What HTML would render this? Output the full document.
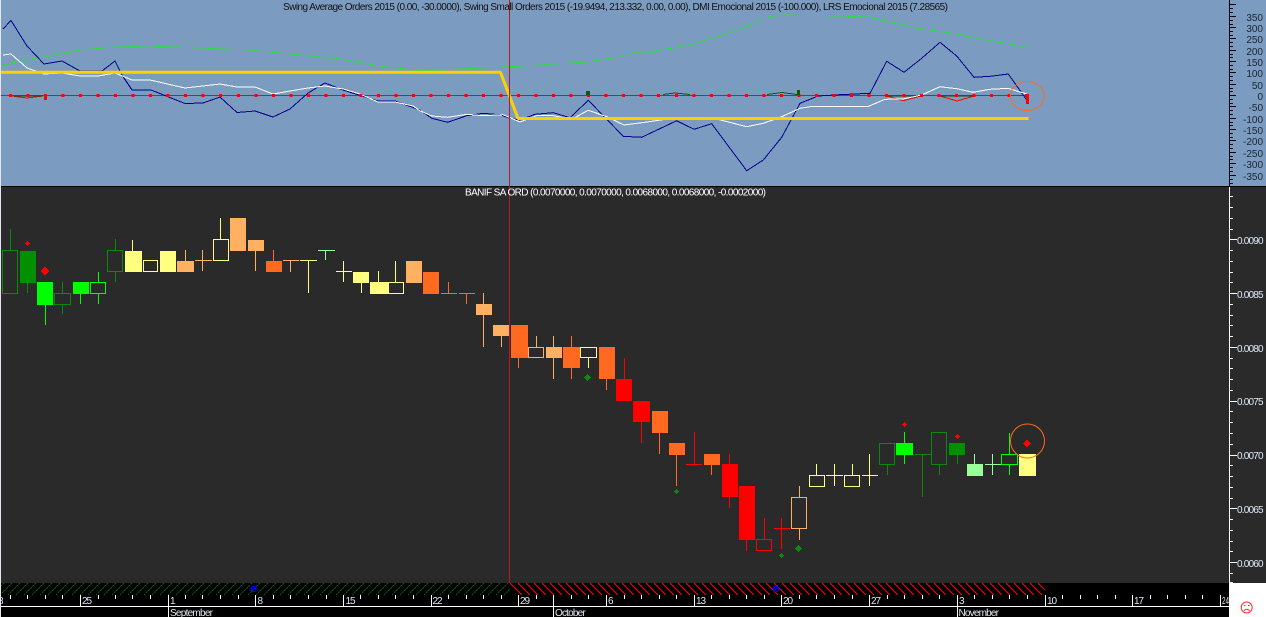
<!DOCTYPE html>
<html><head><meta charset="utf-8"><title>Chart</title>
<style>
html,body{margin:0;padding:0;background:#000}
body{width:1266px;height:617px;overflow:hidden}
svg{display:block}
text{font-family:"Liberation Sans",Arial,sans-serif;font-size:10px}
.c{shape-rendering:crispEdges}
</style></head><body>
<svg width="1266" height="617" viewBox="0 0 1266 617" xmlns="http://www.w3.org/2000/svg">
<defs>
<clipPath id="cg"><rect x="1" y="583" width="509" height="12"/></clipPath>
<clipPath id="cr"><rect x="510" y="583" width="535" height="12"/></clipPath>
<path id="hg" class="c" fill="none" stroke="#0a5e0a" stroke-dasharray="2 1" d="M0 595l12-12m-4 12l12-12m-4 12l12-12m-4 12l12-12m-4 12l12-12m-4 12l12-12m-4 12l12-12m-4 12l12-12m-4 12l12-12m-4 12l12-12"/>
<path id="hr" class="c" fill="none" stroke="#ff0000" d="M0 583l12 12m-4-12l12 12m-4-12l12 12m-4-12l12 12m-4-12l12 12m-4-12l12 12m-4-12l12 12m-4-12l12 12m-4-12l12 12m-4-12l12 12"/>
</defs>
<g class="c">
<rect x="0" y="0" width="1266" height="186" fill="#7b9cc0"/>
<rect x="0" y="186" width="1266" height="1" fill="#000"/>
<rect x="0" y="187" width="1266" height="396" fill="#2a2a2a"/>
<rect x="0" y="583" width="1229" height="34" fill="#000"/>
<rect x="1229" y="583" width="37" height="34" fill="#fff"/>
<rect x="0" y="0" width="1" height="617" fill="#e4e8ee"/>
</g>
<g clip-path="url(#cg)">
<use href="#hg" x="-8"/><use href="#hg" x="72"/><use href="#hg" x="152"/><use href="#hg" x="232"/><use href="#hg" x="312"/><use href="#hg" x="392"/><use href="#hg" x="472"/>
</g>
<g clip-path="url(#cr)">
<use href="#hr" x="510"/><use href="#hr" x="590"/><use href="#hr" x="670"/><use href="#hr" x="750"/><use href="#hr" x="830"/><use href="#hr" x="910"/><use href="#hr" x="990"/>
</g>

<!-- upper panel -->
<g class="c" fill="none">
<polyline stroke="#00ff00" stroke-dasharray="3 2" points="3,65 27,60 44,57 80,50 115,47 150,46 200,48 250,50 300,55 340,59 380,66 420,71 503,67 510,66.7 587,62 620,57 637,52 650,52 690,45 720,36 745,26.7 763,18 781.7,15 840,16 868,17 917,28 957,34 990,40.7 1027,47"/>
<polyline stroke="#ff0000" points="1,95.5 1028,95.5"/>
<path stroke="#ff0000" d="M12 96L27 98L43 96M887 96L903 100.7L921 96M940 96L957 101L974 96"/>
<path stroke="#0a5a0a" d="M14 96H43M663 94.5L675 93L690 94.5M767 94.5L782 92.5L797 94.5M887 96H921M940 96H974"/>
<polyline stroke="#00008b" points="3,29 11,20.5 27,46 44,64 62,61 80,71 102,71 115,61 122,75 132,90 151,90 185,103.5 203,103 220,97 237,112.5 255,111 273,117 290,109 308,93 325,83 343,90 378,101 395,101 420,110 431.7,118.3 447.7,122.3 466.7,115.7 483.3,113.3 500,114.7 510,118.3 520,120 535,114.3 553.3,112.7 570,117.7 588.3,100.3 623.3,136.3 641.7,137.3 676.7,120.7 694,129.3 711.7,123.7 746.7,170.7 763.3,160 781.7,137.3 800,103.3 818,96 840,94.7 861,93.7 870,93.3 886.7,61.3 904,72.3 921.7,58.3 940,42.3 956.7,56 974,77.3 990,76.3 1008.3,74 1026.7,100"/>
<polyline stroke="#ffffff" points="3,55 11,54 27,68 44,74 62,73 80,76 98,76 115,73 132,80 150,80 185,88 203,86 220,84 237,87 255,87 273,94 290,91 308,88 325,86 343,89 360,94 378,102 395,102 413,106 420,110.7 431.7,116 447.7,117.3 466.7,114.3 483.3,115.7 503,114.7 520,122 536.7,115.7 553.3,115.7 571.7,119.3 588.3,110.3 606.7,116.7 624,125 641.7,122.7 676.7,117.7 694,119 711.7,117.7 746.7,126.7 763.3,123.3 781.7,116.7 800,108.3 813,106.3 840,106.5 868,106.5 885,99.3 903,99 921.7,95 940,86.7 956.7,88.7 973,92.3 990,89.3 1008,88.3 1026.7,94"/>
</g>
<polyline fill="none" stroke="#ffd000" stroke-width="3" stroke-linejoin="bevel" points="1,72.3 500.5,72.3 518,118.5 1028.5,118.5"/>
<g class="c">
<line x1="9" y1="95.5" x2="1028" y2="95.5" stroke="#ff0000" stroke-width="3" stroke-dasharray="3 14.52"/>
<path fill="#ff0000" d="M44 95h3v5h-3zM1026 94h3v10h-3z"/>
<path fill="#0a5a0a" d="M586 91h4v4h-4zM797 90h3v5h-3z"/>
</g>
<ellipse cx="1027.3" cy="96" rx="17" ry="14.5" fill="none" stroke="#ff6a20" stroke-width="1"/>
<rect x="509" y="0" width="1" height="583" fill="#b41a24" class="c"/>

<text x="283" y="10" fill="#111" textLength="665" lengthAdjust="spacing">Swing Average Orders 2015 (0.00, -30.0000), Swing Small Orders 2015 (-19.9494, 213.332, 0.00, 0.00), DMI Emocional 2015 (-100.000), LRS Emocional 2015 (7.28565)</text>
<text x="465" y="195.5" fill="#fff" textLength="301" lengthAdjust="spacing">BANIF SA ORD (0.0070000, 0.0070000, 0.0068000, 0.0068000, -0.0002000)</text>

<!-- upper axis -->
<g class="c" fill="none" stroke="#000">
<path d="M1229.5 0V186"/>
<path d="M1230 4.5h6M1230 16.5h6M1230 27.5h6M1230 38.5h6M1230 50.5h6M1230 61.5h6M1230 72.5h6M1230 84.5h6M1230 95.5h6M1230 106.5h6M1230 118.5h6M1230 129.5h6M1230 140.5h6M1230 152.5h6M1230 163.5h6M1230 175.5h6"/>
<path d="M1230 8.5h3M1230 12.5h3M1230 20.5h3M1230 24.5h3M1230 31.5h3M1230 35.5h3M1230 42.5h3M1230 46.5h3M1230 54.5h3M1230 57.5h3M1230 65.5h3M1230 69.5h3M1230 76.5h3M1230 80.5h3M1230 88.5h3M1230 91.5h3M1230 99.5h3M1230 103.5h3M1230 110.5h3M1230 114.5h3M1230 122.5h3M1230 125.5h3M1230 133.5h3M1230 137.5h3M1230 144.5h3M1230 148.5h3M1230 156.5h3M1230 159.5h3M1230 167.5h3M1230 171.5h3M1230 179.5h3M1230 183.5h3"/>
</g>
<g fill="#1c2430" text-anchor="end" style="font-size:9.4px">
<text x="1263" y="21">350</text><text x="1263" y="32">300</text><text x="1263" y="43">250</text><text x="1263" y="55">200</text><text x="1263" y="66">150</text><text x="1263" y="77">100</text><text x="1263" y="89">50</text><text x="1263" y="100">0</text><text x="1263" y="111">-50</text><text x="1263" y="123">-100</text><text x="1263" y="134">-150</text><text x="1263" y="145">-200</text><text x="1263" y="157">-250</text><text x="1263" y="168">-300</text><text x="1263" y="180">-350</text>
</g>

<!-- candles -->
<g class="c">
<path fill="#009000" d="M20 251h16v32h-16zM949 443h16v12h-16z"/>
<path fill="#00ff00" d="M37 282h16v23h-16zM73 282h16v12h-16zM896 443h17v12h-17z"/>
<path fill="#ffff80" d="M125 251h17v21h-17zM160 251h16v21h-16zM353 272h16v11h-16zM370 282h18v12h-18zM1019 454h17v22h-17z"/>
<path fill="#ffb060" d="M177 261h17v11h-17zM230 218h16v33h-16zM248 240h16v11h-16zM406 261h16v22h-16zM476 304h16v11h-16zM493 325h16v11h-16zM546 347h16v11h-16z"/>
<path fill="#ff6a20" d="M266 261h16v11h-16zM423 272h16v22h-16zM511 325h17v33h-17zM563 347h17v21h-17zM599 347h16v32h-16zM652 411h16v22h-16zM669 443h16v12h-16zM704 454h16v11h-16z"/>
<path fill="#ff0000" d="M616 379h16v22h-16zM633 401h17v21h-17zM722 464h16v33h-16zM739 486h16v54h-16z"/>
<path fill="#98ff98" d="M967 464h16v12h-16z"/>
<g fill="none">
<path stroke="#0a8a0a" d="M2.5 250.5H17.5V293.5H2.5ZM10.5 229V250M27.5 283V293M54.5 293.5H70.5V304.5H54.5ZM62.5 282V293M62.5 305V314M107.5 250.5H122.5V271.5H107.5ZM115.5 239V250M115.5 272V282M879.5 443.5H894.5V464.5H879.5ZM887.5 465V475M915 454.5H931M922.5 455V497M931.5 432.5H946.5V464.5H931.5ZM939.5 465V475M957.5 455V464"/>
<path stroke="#00ff00" d="M45.5 305V325M80.5 294V304M90.5 282.5H105.5V293.5H90.5ZM98.5 272V282M98.5 294V304M904.5 432V443M904.5 455V464M1001.5 454.5H1017.5V464.5H1001.5ZM1009.5 433V454M1009.5 465V475"/>
<path stroke="#ffff80" d="M132.5 240V251M143.5 260.5H157.5V271.5H143.5ZM213.5 239.5H228.5V260.5H213.5ZM220.5 218V239M300 260.5H317M308.5 261V293M336 271.5H352M343.5 261V282M361.5 283V293M378.5 271V282M388.5 282.5H403.5V293.5H388.5ZM395.5 261V282M580.5 347.5H596.5V357.5H580.5ZM588.5 358V368M809.5 475.5H824.5V486.5H809.5ZM816.5 464V475M826 475.5H843M834.5 464V486M844.5 475.5H859.5V486.5H844.5ZM852.5 464V475M862 475.5H878M869.5 454V486"/>
<path stroke="#ffb060" d="M185.5 250V261M195 260.5H212M202.5 250V271M255.5 251V271M283 260.5H299M290.5 261V272M483.5 293V304M483.5 315V347M501.5 336V347M528.5 347.5H543.5V357.5H528.5ZM536.5 336V347M553.5 336V347M553.5 358V379M791.5 497.5H806.5V528.5H791.5ZM799.5 486V497M799.5 529V540"/>
<path stroke="#ff6a20" d="M273.5 250V261M441 293.5H457M448.5 282V293M459 293.5H475M466.5 294V304M518.5 358V368M571.5 336V347M571.5 368V379M606.5 379V390M659.5 433V454M676.5 455V486M711.5 465V475"/>
<path stroke="#ff0000" d="M624.5 358V379M641.5 422V443M686 464.5H702M694.5 432V464M729.5 454V464M729.5 497V508M746.5 540V551M756.5 539.5H771.5V550.5H756.5ZM764.5 518V539M774 528.5H790M781.5 518V549"/>
<path stroke="#98ff98" d="M318 250.5H335M325.5 251V260M974.5 454V464M985 464.5H1001M992.5 454V475"/>
</g>
<!-- markers -->
<path fill="#ff0000" d="M27 241h1v1h1v1h1v1h-1v1h-1v1h-1v-1h-1v-1h-1v-1h1v-1h1zM44 267h2v1h1v1h1v1h1v2h-1v1h-1v1h-1v1h-2v-1h-1v-1h-1v-1h-1v-2h1v-1h1v-1h1zM904 422h1v1h1v1h1v1h-1v1h-1v1h-1v-1h-1v-1h-1v-1h1v-1h1zM957 434h1v1h1v1h1v1h-1v1h-1v1h-1v-1h-1v-1h-1v-1h1v-1h1zM1026 440h2v1h1v1h1v1h1v1h-1v1h-1v1h-1v1h-2v-1h-1v-1h-1v-1h-1v-1h1v-1h1v-1h1z"/>
<path fill="#0c8a0c" d="M587 374h1v1h1v1h1v1h1v1h-1v1h-1v1h-1v1h-1v-1h-1v-1h-1v-1h-1v-1h1v-1h1v-1h1zM676 489h1v1h1v1h1v1h-1v1h-1v1h-1v-1h-1v-1h-1v-1h1v-1h1zM781 553h1v1h1v1h1v1h-1v1h-1v1h-1v-1h-1v-1h-1v-1h1v-1h1zM798 545h1v1h1v1h1v1h1v1h-1v1h-1v1h-1v1h-1v-1h-1v-1h-1v-1h-1v-1h1v-1h1v-1h1z"/>
</g>
<circle cx="1027.5" cy="441" r="17" fill="none" stroke="#ff6a20"/>

<!-- lower price axis -->
<g class="c" fill="none" stroke="#fff">
<path d="M1229.5 187V583"/>
<path d="M1230 239.5h7M1230 293.5h7M1230 347.5h7M1230 401.5h7M1230 455.5h7M1230 508.5h7M1230 562.5h7"/>
<path d="M1230 196.5h3M1230 207.5h3M1230 218.5h3M1230 229.5h3M1230 250.5h3M1230 261.5h3M1230 272.5h3M1230 282.5h3M1230 304.5h3M1230 315.5h3M1230 325.5h3M1230 336.5h3M1230 358.5h3M1230 368.5h3M1230 379.5h3M1230 390.5h3M1230 411.5h3M1230 422.5h3M1230 433.5h3M1230 444.5h3M1230 465.5h3M1230 476.5h3M1230 487.5h3M1230 498.5h3M1230 519.5h3M1230 530.5h3M1230 541.5h3M1230 551.5h3M1230 573.5h3M1230 582.5h3"/>
</g>
<g fill="#dce9f5" style="font-size:9.4px">
<text x="1237" y="244" textLength="26.5">0.0090</text><text x="1237" y="298" textLength="26.5">0.0085</text><text x="1237" y="352" textLength="26.5">0.0080</text><text x="1237" y="405" textLength="26.5">0.0075</text><text x="1237" y="459" textLength="26.5">0.0070</text><text x="1237" y="513" textLength="26.5">0.0065</text><text x="1237" y="567" textLength="26.5">0.0060</text>
</g>

<!-- time axis -->
<g class="c" fill="none" stroke="#fff">
<path d="M1 606.5H1229"/>
<path d="M80.5 595V606M255.5 595V606M343.5 595V606M431.5 595V606M518.5 595V606M606.5 595V606M694.5 595V606M781.5 595V606M869.5 595V606M1045.5 595V606M1132.5 595V606M1220.5 595V606M168.5 595V617M553.5 595V617M957.5 595V617"/>
<path d="M10.5 595v4M27.5 595v4M45.5 595v4M62.5 595v4M98.5 595v4M115.5 595v4M132.5 595v4M150.5 595v4M185.5 595v4M202.5 595v4M220.5 595v4M238.5 595v4M273.5 595v4M290.5 595v4M308.5 595v4M326.5 595v4M360.5 595v4M378.5 595v4M395.5 595v4M413.5 595v4M448.5 595v4M466.5 595v4M483.5 595v4M501.5 595v4M536.5 595v4M571.5 595v4M588.5 595v4M624.5 595v4M641.5 595v4M659.5 595v4M676.5 595v4M711.5 595v4M729.5 595v4M746.5 595v4M764.5 595v4M799.5 595v4M816.5 595v4M834.5 595v4M852.5 595v4M887.5 595v4M904.5 595v4M922.5 595v4M939.5 595v4M974.5 595v4M992.5 595v4M1009.5 595v4M1027.5 595v4M1062.5 595v4M1080.5 595v4M1097.5 595v4M1115.5 595v4M1150.5 595v4M1167.5 595v4M1185.5 595v4M1202.5 595v4"/>
</g>
<g fill="#dfe9f2" style="font-size:9.6px">
<text x="-2" y="604">8</text><text x="82" y="604" textLength="10">25</text><text x="170" y="604">1</text><text x="257.500" y="604">8</text><text x="345.500" y="604" textLength="10">15</text><text x="432.500" y="604" textLength="10">22</text><text x="520" y="604" textLength="10">29</text><text x="608" y="604">6</text><text x="696" y="604" textLength="10">13</text><text x="783" y="604" textLength="10">20</text><text x="871" y="604" textLength="10">27</text><text x="959" y="604">3</text><text x="1047" y="604" textLength="10">10</text><text x="1134" y="604" textLength="10">17</text>
<text x="1222" y="604" textLength="7" lengthAdjust="spacingAndGlyphs">24</text>
<text x="170" y="616" textLength="43">September</text><text x="555" y="616" textLength="30.700">October</text><text x="958.500" y="616" textLength="40.500">November</text>
</g>

<!-- blue markers -->
<g fill="none" stroke="#0000ff" stroke-width="1.300">
<circle cx="253.700" cy="589" r="2.600"/><path d="M251 589h5.500"/>
<circle cx="776" cy="589" r="2.600"/><path d="M774 591l4-4"/>
</g>

<!-- status icon -->
<g fill="none" stroke="#ff2a2a" stroke-width="1">
<circle cx="1246.700" cy="607.500" r="5.500"/>
<path d="M1243.800 610.800q2.900-3 5.800 0"/>
<path d="M1244 605.500h1.500M1248 605.500h1.500"/>
</g>
</svg>
</body></html>
